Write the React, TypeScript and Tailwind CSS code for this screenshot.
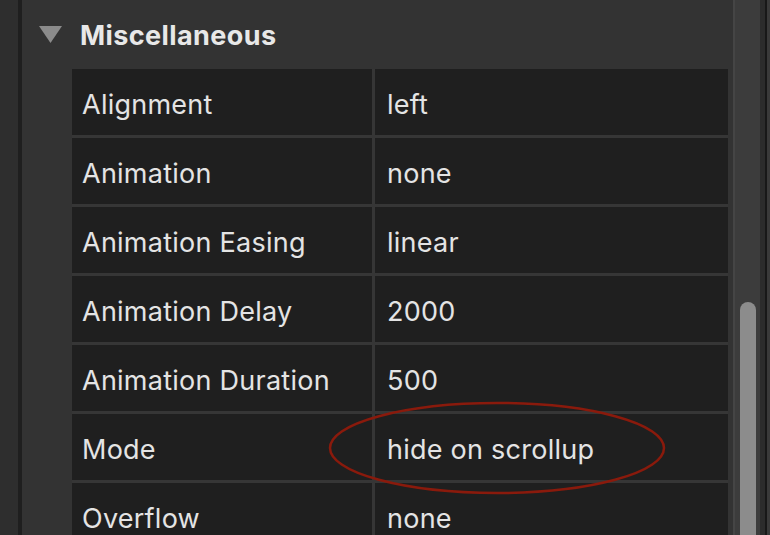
import React from "react";

const rows: [string, string][] = [
  ["Alignment", "left"],
  ["Animation", "none"],
  ["Animation Easing", "linear"],
  ["Animation Delay", "2000"],
  ["Animation Duration", "500"],
  ["Mode", "hide on scrollup"],
  ["Overflow", "none"],
];

export default function App() {
  return (
    <div
      className="relative flex w-[770px] h-[535px] overflow-hidden bg-[#333333]"
      style={{ fontFamily: "Inter, 'Liberation Sans', sans-serif" }}
    >
      <div className="w-[18px] shrink-0 bg-[#2e2e2e]" />
      <div className="w-[4px] shrink-0 bg-[#1f1f1f]" />
      <div className="flex-1 flex flex-col bg-[#333333] pr-[5px]">
        <div className="h-[69px] shrink-0 flex items-center pl-[17px] pt-[3px]">
          <svg width="23" height="17" viewBox="0 0 23 17" className="shrink-0 -mt-[4px]">
            <polygon points="0,0 23,0 11.5,17" fill="#8b8b8b" />
          </svg>
          <span className="ml-[18px] text-[27px] font-bold text-[#e8e8e8] tracking-[0.4px]">
            Miscellaneous
          </span>
        </div>
        <div className="ml-[50px] grid grid-cols-[300px_1fr] gap-[3px] bg-[#363636]">
          {rows.map(([k, v]) => (
            <React.Fragment key={k}>
              <div className="h-[66px] bg-[#1f1f1f] flex items-center pl-[10px] pt-[6px] text-[27px] tracking-[0.25px] text-[#e4e4e4]">
                {k}
              </div>
              <div className="h-[66px] bg-[#1f1f1f] flex items-center pl-[12px] pt-[6px] text-[27px] tracking-[0.25px] text-[#e4e4e4]">
                {v}
              </div>
            </React.Fragment>
          ))}
        </div>
      </div>
      <div className="relative w-[27px] shrink-0 bg-[#3c3c3c] border-l-2 border-[#454545]">
        <div className="absolute left-[5px] top-[302px] w-[16px] h-[300px] rounded-full bg-[#8c8c8c]" />
      </div>
      <div className="w-[5px] shrink-0 bg-[#2c2c2c]" />
      <div className="w-[2px] shrink-0 bg-[#181818]" />
      <div className="w-[3px] shrink-0 bg-[#3a3a3a]" />
      <svg
        className="absolute left-[328px] top-[401px] pointer-events-none"
        width="338"
        height="94"
        viewBox="0 0 338 94"
      >
        <ellipse cx="169" cy="47" rx="167" ry="45" fill="none" stroke="#8a1a0c" strokeWidth="2.5" />
      </svg>
    </div>
  );
}
